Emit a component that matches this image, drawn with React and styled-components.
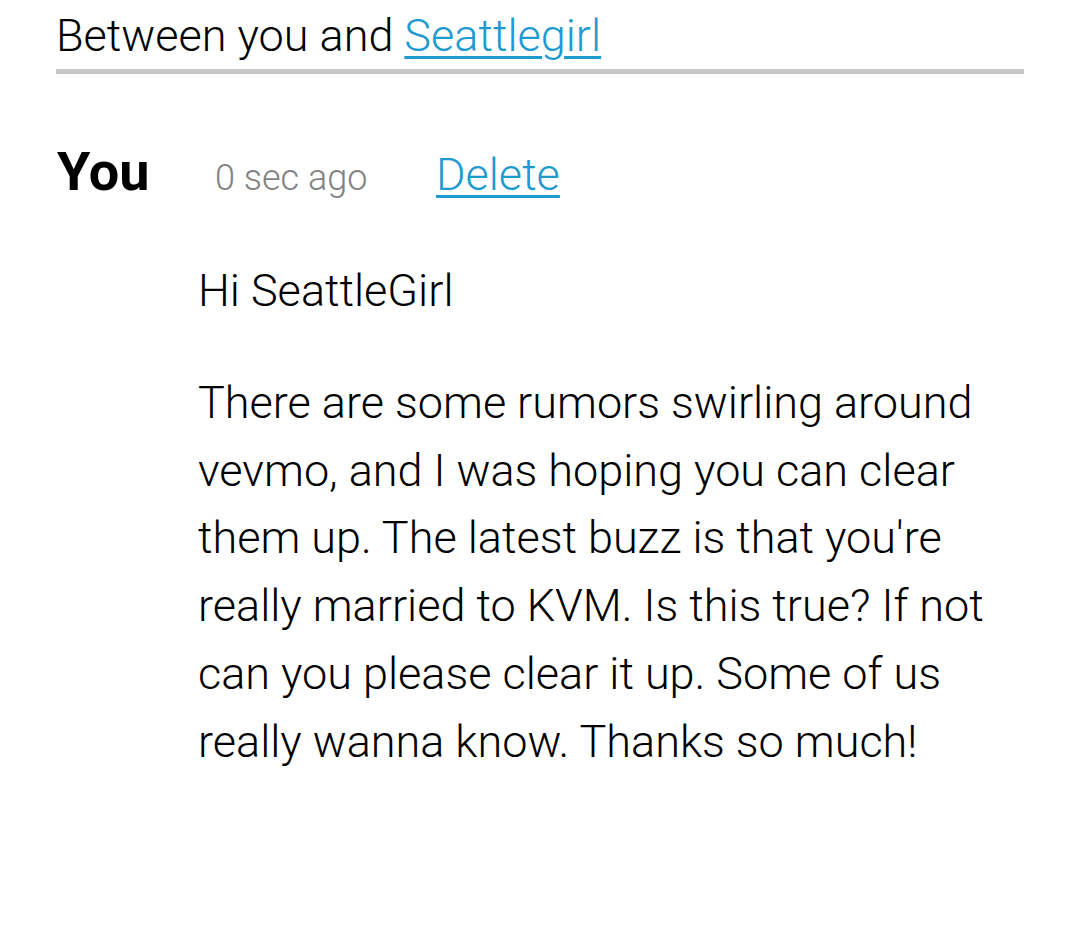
import React from "react";
import styled, { createGlobalStyle } from "styled-components";

const GlobalStyle = createGlobalStyle`
    body {
        margin: 0;
        background: #ffffff;
        font-family: Roboto, "Noto Sans", sans-serif;
        color: #000;
    }
`;

const Page = styled.div`
    width: 968px;
    padding: 0 0 0 56px;
`;

const Header = styled.div`
    font-size: 45px;
    font-weight: 300;
    line-height: 45px;
    padding: 13px 0 11px 0;
    border-bottom: 5px solid #c8c8c8;
`;

const Link = styled.a`
    color: #1d9bd1;
    text-decoration: underline;
    text-decoration-thickness: 3px;
    text-underline-offset: 5px;
    cursor: pointer;
`;

const MetaRow = styled.div`
    display: flex;
    align-items: baseline;
    margin-top: 66px;
    height: 60px;
`;

const Author = styled.span`
    font-size: 54px;
    font-weight: 700;
    width: 158px;
    padding-left: 1px;
`;

const Time = styled.span`
    font-size: 36px;
    font-weight: 300;
    color: #828282;
    width: 221px;
`;

const Action = styled.span`
    font-size: 45px;
    font-weight: 300;
`;

const Body = styled.div`
    padding: 57px 10px 0 142px;
    font-size: 45px;
    font-weight: 300;
    line-height: 67.8px;
`;

const Para = styled.p`
    margin: 0 0 44px 0;
`;

export default function App() {
    return (
        <>
            <GlobalStyle />
            <Page>
                <Header>
                    Between you and <Link>Seattlegirl</Link>
                </Header>
                <MetaRow>
                    <Author>You</Author>
                    <Time>0 sec ago</Time>
                    <Action>
                        <Link>Delete</Link>
                    </Action>
                </MetaRow>
                <Body>
                    <Para>Hi SeattleGirl</Para>
                    <Para>
                        There are some rumors swirling around vevmo, and I was hoping you can clear them up.
                        The latest buzz is that you're really married to KVM. Is this true? If not can you
                        please clear it up. Some of us really wanna know. Thanks so much!
                    </Para>
                </Body>
            </Page>
        </>
    );
}
